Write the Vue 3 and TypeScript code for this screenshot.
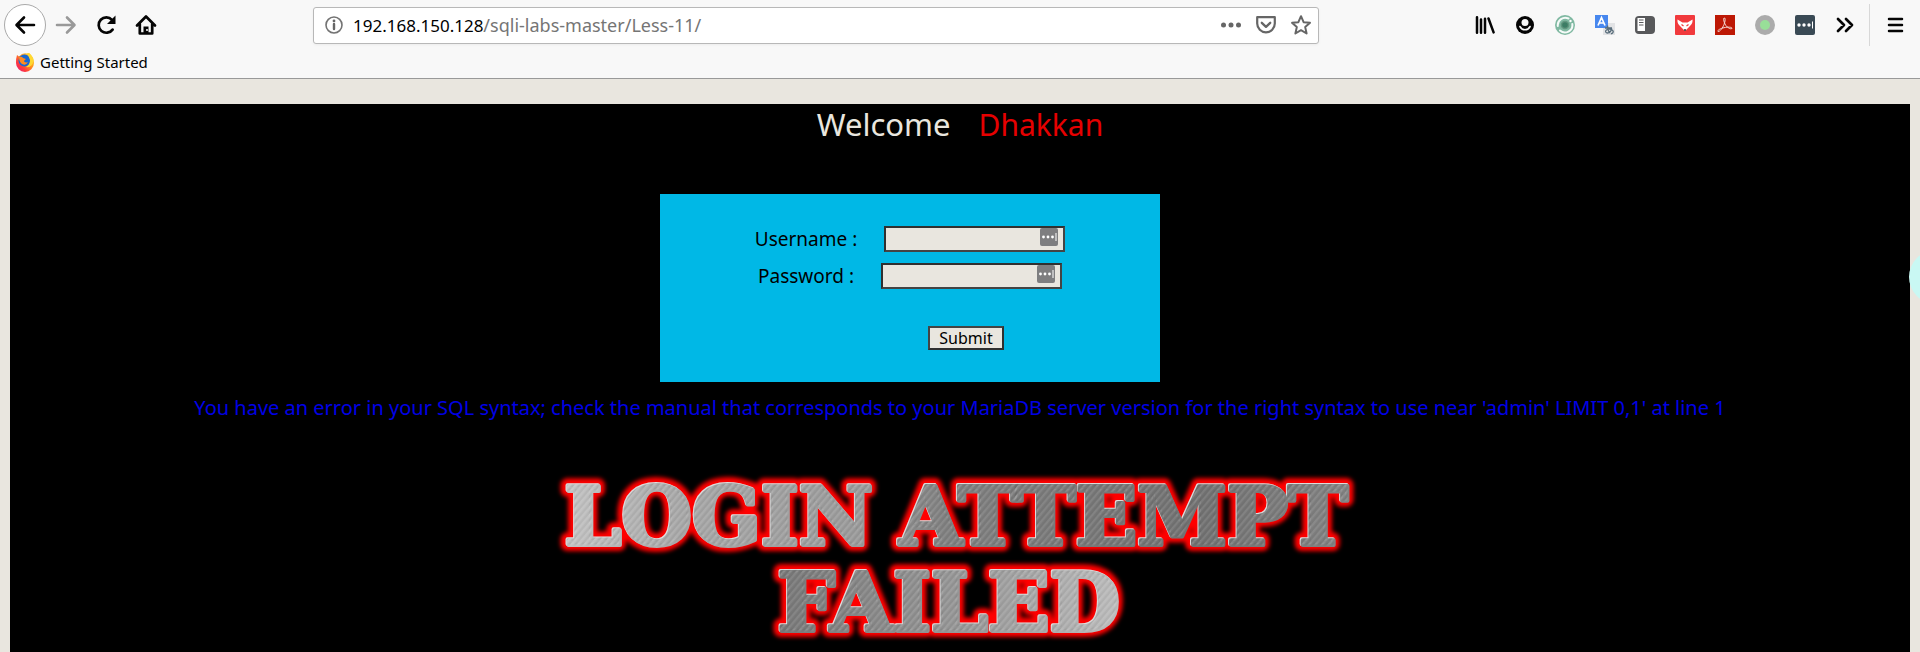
<script setup lang="ts">
import { ref } from 'vue'

const path = ref('/sqli-labs-master/Less-11/')
const username = ref('')
const password = ref('')
</script>

<template>
  <div class="browser">
    <header class="chrome">
      <nav class="toolbar" aria-label="Navigation">
        <div class="group">
          <button class="tool back" aria-label="Back">
            <svg width="22" height="22" viewBox="0 0 22 22"><path d="M20 11H3M10 3.500L2.500 11L10 18.500" fill="none" stroke="#050505" stroke-width="2.600" stroke-linecap="round" stroke-linejoin="round" /></svg>
          </button>
          <button class="tool" aria-label="Forward" disabled>
            <svg width="22" height="22" viewBox="0 0 22 22"><path d="M2 11H19M12 3.500L19.500 11L12 18.500" fill="none" stroke="#999" stroke-width="2.600" stroke-linecap="round" stroke-linejoin="round" /></svg>
          </button>
          <button class="tool" aria-label="Reload">
            <svg width="22" height="22" viewBox="0 0 22 22"><path d="M17.600 15.600A7.700 7.700 0 1 1 17 5.800" fill="none" stroke="#050505" stroke-width="2.700" stroke-linecap="round" /><path d="M20.500 1.500V10H12Z" fill="#050505" /></svg>
          </button>
          <button class="tool" aria-label="Home">
            <svg width="22" height="22" viewBox="0 0 22 22"><path d="M2 11.500L11 2.500L20 11.500M4.800 10V19.500H17.200V10" fill="none" stroke="#050505" stroke-width="2.700" stroke-linecap="round" stroke-linejoin="round" /><path d="M8.500 19V12.500H13.500V19Z" fill="#050505" /><circle cx="12" cy="16" r="1" fill="#fff" /></svg>
          </button>
        </div>

        <div class="address">
          <svg class="info" width="20" height="20" viewBox="0 0 20 20"><circle cx="10" cy="10" r="8" fill="none" stroke="#737373" stroke-width="1.600" /><path d="M10 9V14" stroke="#666" stroke-width="2.400" stroke-linecap="round" /><circle cx="10" cy="5.900" r="1.400" fill="#666" /></svg>
          <label class="host" for="path">192.168.150.128</label>
          <input id="path" v-model="path" class="path" type="text" spellcheck="false" />
          <button class="tool small" aria-label="Page actions">
            <svg width="22" height="22" viewBox="0 0 22 22" fill="#666"><circle cx="3.500" cy="11" r="2.500" /><circle cx="11" cy="11" r="2.500" /><circle cx="18.500" cy="11" r="2.500" /></svg>
          </button>
          <button class="tool small" aria-label="Save to Pocket">
            <svg width="22" height="22" viewBox="0 0 22 22" fill="none" stroke="#666" stroke-linecap="round" stroke-linejoin="round"><path d="M2.200 3.200H19.800V9.500A8.800 8.800 0 0 1 2.200 9.500Z" stroke-width="2.200" /><path d="M6.800 8.800L11 12.800L15.200 8.800" stroke-width="2.300" /></svg>
          </button>
          <button class="tool small" aria-label="Bookmark this page">
            <svg width="22" height="22" viewBox="0 0 22 22"><path d="M11 2.200L13.600 8.200L20 8.800L15.200 13.100L16.600 19.500L11 16.200L5.400 19.500L6.800 13.100L2 8.800L8.400 8.200Z" fill="none" stroke="#666" stroke-width="2" stroke-linejoin="round" /></svg>
          </button>
        </div>

        <div class="group">
          <button class="tool" aria-label="Library">
            <svg width="20" height="20" viewBox="0 0 20 20" stroke="#050505" stroke-width="2.500" stroke-linecap="round"><path d="M2 2.300V17.700M6 4.500V17.700M10 3.800V17.700M13.500 3.500L18.600 17.400" /></svg>
          </button>
          <button class="tool" aria-label="Account">
            <svg width="20" height="20" viewBox="0 0 20 20"><circle cx="10" cy="10" r="9" fill="#050505" /><circle cx="10" cy="7.600" r="3.500" fill="#f8f8f8" /><path d="M5 11.600C7 15.800 13 15.800 15 11.600" fill="none" stroke="#f8f8f8" stroke-width="1.700" stroke-linecap="round" /></svg>
          </button>
          <button class="tool" aria-label="Privacy extension">
            <svg width="20" height="20" viewBox="0 0 20 20"><circle cx="10" cy="10" r="10" fill="#7fb8a1" /><path d="M13.500 3.500A7.500 7.500 0 0 0 2.800 11M5 15.500A7.400 7.400 0 0 0 17.300 9" fill="none" stroke="#f5faf8" stroke-width="2" stroke-linecap="round" /><circle cx="10" cy="10" r="4.300" fill="#62967f" /><circle cx="10" cy="10" r="2.800" fill="#3c7d65" /><circle cx="15.500" cy="6" r="1.200" fill="#fff" /></svg>
          </button>
          <button class="tool" aria-label="Translate">
            <svg width="20" height="20" viewBox="0 0 20 20"><path d="M8 8H20V20H8Z" fill="#e2e3e5" /><path d="M0 0H13V13H0Z" fill="#4787ee" /><path d="M3 10.500L6.500 2.500L10 10.500M4.200 8H8.800" fill="none" stroke="#fff" stroke-width="1.700" /><path d="M10 13H17M12.500 10.500C12.500 14 13 16 15 18M17 13.500C15.500 18 12 19 10.700 17C9.800 14.500 15 13.200 17.500 15.200C19.300 17 17.500 18.500 15.800 18.800" fill="none" stroke="#586d7b" stroke-width="1.300" /></svg>
          </button>
          <button class="tool" aria-label="Reader sidebar">
            <svg width="20" height="20" viewBox="0 0 20 20"><rect y="1" width="20" height="18" rx="4" fill="#58595b" /><path d="M2.500 3H10V16H2.500Z" fill="#fff" /><path d="M4 5H8.500M4 7.500H8.500M4 10H8.500" stroke="#58595b" stroke-width="1.200" /></svg>
          </button>
          <button class="tool" aria-label="Fox extension">
            <svg width="20" height="20" viewBox="0 0 20 20"><rect width="20" height="20" rx="1" fill="#f13a3d" /><path d="M2.500 4.500L7.500 7.500H12.500L17.500 4.500C18 9 15.500 10 14.500 11.500L10 16L5.500 11.500C4.500 10 2 9 2.500 4.500Z" fill="#fff" /><path d="M6.500 9.500L8.500 11M13.500 9.500L11.500 11" stroke="#f13a3d" stroke-width="1.200" /><circle cx="10" cy="15" r="1" fill="#333" /></svg>
          </button>
          <button class="tool" aria-label="PDF">
            <svg width="20" height="20" viewBox="0 0 20 20"><path d="M0 0H20V20H0Z" fill="#bd1805" /><path d="M9 3C11 2.500 10 7 9 9.500C7.800 12.500 5 17 3 16.500C2 15.500 5 13.500 9 12.700C13 11.800 17 12 17 13.300C16.500 14.800 12.500 13 10.500 10C9 7.500 8.200 4 9 3Z" fill="none" stroke="#f6d8d3" stroke-width="1" /></svg>
          </button>
          <button class="tool" aria-label="Status">
            <svg width="20" height="20" viewBox="0 0 20 20"><circle cx="10" cy="10" r="10" fill="#ababab" /><circle cx="10" cy="10" r="5" fill="#98df98" /></svg>
          </button>
          <button class="tool" aria-label="Password manager">
            <svg width="20" height="20" viewBox="0 0 20 20"><rect width="20" height="20" rx="2" fill="#3a4a55" /><g fill="#fff"><circle cx="4" cy="10" r="1.700" /><circle cx="9" cy="10" r="1.700" /><circle cx="14" cy="10" r="1.700" /><path d="M17 6.500H18V13.500H17Z" /></g></svg>
          </button>
          <button class="tool" aria-label="More tools">
            <svg width="20" height="20" viewBox="0 0 20 20"><path d="M3 4L9 10L3 16M11 4L17 10L11 16" fill="none" stroke="#050505" stroke-width="2.700" stroke-linecap="round" stroke-linejoin="round" /></svg>
          </button>
        </div>
        <div class="menu">
          <button class="tool" aria-label="Open menu">
            <svg width="20" height="20" viewBox="0 0 20 20"><path d="M4 4H17M4 10H17M4 16H17" stroke="#050505" stroke-width="2.500" stroke-linecap="round" /></svg>
          </button>
        </div>
      </nav>

      <div class="bookmarks">
        <a class="bookmark" href="#">
          <svg width="20" height="20" viewBox="0 0 20 20">
            <defs>
              <linearGradient id="flame" x1="1" y1="0" x2="0" y2="1"><stop offset="0" stop-color="#fff044" /><stop offset="0.400" stop-color="#ff9a1c" /><stop offset="0.700" stop-color="#ff3b3b" /><stop offset="1" stop-color="#e31587" /></linearGradient>
            </defs>
            <path d="M2 3L4 4.500Q8 0 12 1.500L14 1Q19 5 19 11A9 9 0 0 1 1 11Q1 6 2 3Z" fill="url(#flame)" />
            <circle cx="9.500" cy="8.500" r="6" fill="#1768d2" />
            <path d="M4 5Q7 4 8 6L11 7Q9 8 9 9.500Q11 11 13 10Q11 14 7 12Q4 10 4 5Z" fill="#ff8a20" />
            <path d="M12 1.500Q14 5 15 8Q15 13 11 15Q17 16 18.500 9Q18 4 14 1Z" fill="#ffd832" />
          </svg>
          <span>Getting Started</span>
        </a>
      </div>
    </header>

    <main class="page">
      <h1 class="welcome"><span>Welcome</span><span class="name">Dhakkan</span></h1>

      <form class="login" @submit.prevent>
        <div class="row">
          <label for="username">Username :</label>
          <div class="field">
            <input id="username" v-model="username" type="text" />
            <svg class="key" width="18" height="18" viewBox="0 0 18 18"><rect width="18" height="18" rx="2" fill="#7e7e80" /><g fill="#fff"><circle cx="3.500" cy="9" r="1.400" /><circle cx="8" cy="9" r="1.400" /><circle cx="12.500" cy="9" r="1.400" /><path d="M15.500 5H16.500V13H15.500Z" /></g></svg>
          </div>
        </div>
        <div class="row">
          <label for="password">Password :</label>
          <div class="field">
            <input id="password" v-model="password" type="password" />
            <svg class="key" width="18" height="18" viewBox="0 0 18 18"><rect width="18" height="18" rx="2" fill="#7e7e80" /><g fill="#fff"><circle cx="3.500" cy="9" r="1.400" /><circle cx="8" cy="9" r="1.400" /><circle cx="12.500" cy="9" r="1.400" /><path d="M15.500 5H16.500V13H15.500Z" /></g></svg>
          </div>
        </div>
        <button class="submit" type="submit">Submit</button>
      </form>

      <p class="error">You have an error in your SQL syntax; check the manual that corresponds to your MariaDB server version for the right syntax to use near 'admin' LIMIT 0,1' at line 1</p>

      <svg class="banner" width="840" height="188" viewBox="0 0 840 188" role="img" aria-label="Login attempt failed">
        <defs>
          <linearGradient id="metal" gradientUnits="userSpaceOnUse" x1="20" y1="0" x2="820" y2="0">
            <stop offset="0" stop-color="#c4c4c4" />
            <stop offset="0.150" stop-color="#a8a8a8" />
            <stop offset="0.380" stop-color="#9a9a9a" />
            <stop offset="0.480" stop-color="#808080" />
            <stop offset="0.800" stop-color="#727272" />
            <stop offset="1" stop-color="#858585" />
          </linearGradient>
          <linearGradient id="steel" gradientUnits="userSpaceOnUse" x1="230" y1="0" x2="580" y2="0">
            <stop offset="0" stop-color="#777" />
            <stop offset="0.600" stop-color="#9b9b9b" />
            <stop offset="1" stop-color="#bdbdbd" />
          </linearGradient>
          <pattern id="brush" width="5" height="5" patternUnits="userSpaceOnUse" patternTransform="rotate(40)">
            <path d="M1 0V5" stroke="#fff" stroke-opacity="0.080" stroke-width="2" />
            <path d="M4 0V5" stroke="#000" stroke-opacity="0.080" stroke-width="1" />
          </pattern>
          <filter id="glow" x="-5%" y="-20%" width="110%" height="140%"><feGaussianBlur stdDeviation="2" /></filter>
          <g id="line-one" text-anchor="middle">
            <text x="178" y="88">LOGIN</text>
            <text x="583" y="88">ATTEMPT</text>
          </g>
          <text id="line-two" x="408" y="174" text-anchor="middle">FAILED</text>
        </defs>
        <g fill="#f00" stroke="#f00" stroke-width="14" stroke-linejoin="round" filter="url(#glow)">
          <use href="#line-one" /><use href="#line-two" />
        </g>
        <g fill="#ddd" stroke="#ddd" stroke-width="4" stroke-linejoin="round"><use href="#line-one" /><use href="#line-two" /></g>
        <g stroke-width="4" stroke-linejoin="round">
          <use href="#line-one" x="1" y="1" fill="url(#metal)" stroke="url(#metal)" />
          <use href="#line-two" x="1" y="1" fill="url(#steel)" stroke="url(#steel)" />
        </g>
        <g fill="url(#brush)" stroke="url(#brush)" stroke-width="3"><use href="#line-one" /><use href="#line-two" /></g>
      </svg>
    </main>
    <div class="bubble"></div>
  </div>
</template>

<style>
body {
  margin: 0;
  background: #e9e6df;
}
</style>

<style scoped>
.browser {
  position: relative;
  display: flex;
  flex-direction: column;
  min-height: 100vh;
  overflow: hidden;
  font-family: "Noto Sans", "Open Sans", sans-serif;
  color: #000;
}
.chrome {
  background: #f8f8f8;
  border-bottom: 1px solid #999;
}
.toolbar {
  display: flex;
  align-items: center;
  justify-content: space-between;
  height: 50px;
  padding-left: 4px;
}
.group {
  display: flex;
  flex: none;
}
.tool {
  display: flex;
  align-items: center;
  justify-content: center;
  flex: none;
  width: 40px;
  height: 42px;
  padding: 0;
  border: 0;
  background: none;
}
.tool.back {
  width: 42px;
  border: 1px solid #aaa;
  border-radius: 50%;
  background: #fff;
}
.tool.small {
  width: 35px;
  height: 36px;
}
.address {
  display: flex;
  align-items: center;
  flex: 1;
  height: 35px;
  margin: 0 146px 0 147px;
  padding: 0 0 0 10px;
  border: 1px solid #b8b8b8;
  border-radius: 3px;
  background: #fff;
  box-shadow: 0 1px 3px #0000000d;
  font-size: 17px;
}
.info {
  margin-right: 9px;
}
.path {
  flex: 1;
  min-width: 0;
  padding: 0;
  border: 0;
  outline: 0;
  background: none;
  color: #757575;
  font: inherit;
  font-size: 18px;
}
.menu {
  flex: none;
  padding: 0 5px;
  border-left: 1px solid #d8d8d8;
  margin-left: 4px;
}
.bookmarks {
  display: flex;
  height: 28px;
  padding-left: 15px;
}
.bookmark {
  display: flex;
  align-items: center;
  gap: 5px;
  height: 24px;
  color: #000;
  font-size: 15px;
  text-decoration: none;
}
.page {
  display: flex;
  flex-direction: column;
  flex: 1;
  margin: 25px 10px 0;
  background: #000;
}
.welcome {
  display: flex;
  align-items: baseline;
  justify-content: center;
  gap: 28px;
  height: 40px;
  margin: 0;
  color: #e9e6df;
  font-size: 31px;
  font-weight: 400;
  line-height: 40px;
}
.name {
  color: #e60000;
  font-size: 30px;
}
.login {
  display: flex;
  flex-direction: column;
  align-items: center;
  align-self: center;
  box-sizing: border-box;
  width: 500px;
  margin: 50px 100px 0 0;
  padding: 32px 0;
  background: #00b8e6;
  font-size: 19px;
}
.row {
  display: flex;
  align-items: center;
  gap: 27px;
  margin-bottom: 11px;
  line-height: 26px;
}
.field {
  position: relative;
  display: flex;
}
.field input {
  box-sizing: border-box;
  width: 181px;
  height: 26px;
  padding: 0 28px 0 4px;
  border: 2px solid;
  border-color: #303030 #444 #444 #303030;
  background: #e9e6df;
  font: inherit;
}
.key {
  position: absolute;
  top: 2px;
  right: 7px;
}
.submit {
  box-sizing: border-box;
  height: 24px;
  margin: 26px 0 0 112px;
  padding: 0 9px;
  border: 2px solid;
  border-color: #444 #303030 #303030 #444;
  background: #e9e6df;
  color: #000;
  font: inherit;
  font-size: 16px;
  line-height: 20px;
}
.error {
  margin: 12px 20px 0;
  color: #0000e6;
  font-size: 20px;
  line-height: 28px;
  text-align: center;
}
.banner {
  align-self: center;
  margin-top: 34px;
  font-family: "DejaVu Serif", serif;
  font-size: 81px;
  font-weight: 700;
}
.bubble {
  position: absolute;
  top: 250px;
  right: -43px;
  width: 54px;
  height: 54px;
  border-radius: 50%;
  background: #c9f8f3;
}
</style>
